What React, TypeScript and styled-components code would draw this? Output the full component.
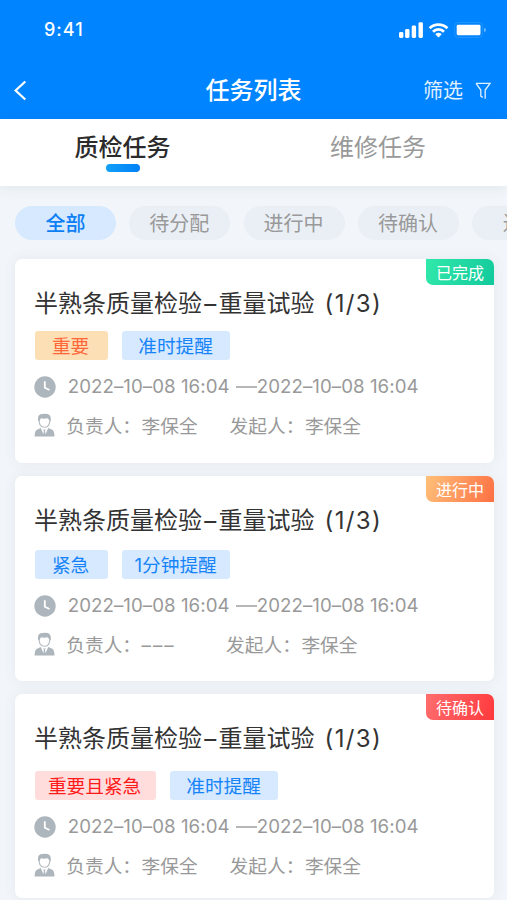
import React from 'react';
import styled, { createGlobalStyle, css } from 'styled-components';

const GlobalStyle = createGlobalStyle`
  * { box-sizing: border-box; }
  body {
    margin: 0;
    background: #f2f6fa;
    font-family: Inter, 'Noto Sans CJK SC', sans-serif;
    overflow: hidden;
  }
`;

const Screen = styled.div`
  width: 507px;
  height: 900px;
  overflow: hidden;
  display: flex;
  flex-direction: column;
  background: #f2f6fa;
`;

const Header = styled.header`
  flex: none;
  height: 118.5px;
  background: #0084ff;
  color: #fff;
`;

const StatusBar = styled.div`
  height: 60px;
  padding: 0 21px 0 44px;
  display: flex;
  align-items: center;
  justify-content: space-between;
`;

const Clock = styled.span`
  font-size: 18px;
  font-weight: 550;
  line-height: 20px;
  letter-spacing: 1px;
`;

const Signals = styled.div`
  display: flex;
  align-items: center;
  svg { display: block; }
`;

const NavBar = styled.div`
  height: 58px;
  padding: 4px 15px 0 13px;
  display: grid;
  grid-template-columns: 100px 1fr 100px;
  align-items: center;
`;

const BackButton = styled.button`
  width: 16px;
  height: 24px;
  padding: 0;
  border: 0;
  background: none;
  color: inherit;
  svg { display: block; }
`;

const PageTitle = styled.h1`
  margin: 0;
  padding-left: 2px;
  text-align: center;
  font-size: 24px;
  font-weight: 500;
  line-height: 32px;
`;

const FilterButton = styled.button`
  padding: 0;
  border: 0;
  background: none;
  color: #e2f1ff;
  font: inherit;
  font-size: 20px;
  line-height: 28px;
  display: flex;
  align-items: center;
  justify-content: flex-end;
  gap: 12px;
  svg { margin-right: 1px; }
`;

const Tabs = styled.nav`
  flex: none;
  height: 67.5px;
  display: grid;
  grid-template-columns: 245px 266px;
  background: #fff;
  box-shadow: 0 2px 12px rgba(60, 80, 100, 0.09);
`;

const Tab = styled.div<{ $active?: boolean }>`
  padding-top: 13px;
  display: flex;
  flex-direction: column;
  align-items: center;
  font-size: 24px;
  line-height: 32px;
  color: #999;
  ${(p) => p.$active && css`
    color: #2b2b2b;
    font-weight: 500;
  `}
`;

const TabMarker = styled.span`
  width: 34px;
  height: 8.5px;
  border-radius: 5px;
  background: linear-gradient(100deg, #14a0f8, #0080f8);
`;

const Chips = styled.div`
  flex: none;
  height: 73px;
  padding: 20px 0 0 15px;
  display: flex;
  gap: 13.3px;
`;

const Chip = styled.button<{ $active?: boolean; $wide?: boolean }>`
  flex: none;
  width: ${(p) => (p.$wide ? 122 : 101)}px;
  height: 34px;
  padding: 1px 1px 0 0;
  border: 0;
  border-radius: 17px;
  font: inherit;
  font-size: 20px;
  line-height: 34px;
  color: #999;
  background: #eaeff5;
  ${(p) => p.$active && css`
    padding-right: 0;
    color: #0d7ff5;
    font-weight: 500;
    background: #d6e9fe;
  `}
`;

const CardList = styled.main`
  padding: 0 13px 0 14.5px;
  display: flex;
  flex-direction: column;
  gap: 13.2px;
`;

const Card = styled.article`
  position: relative;
  flex: none;
  height: 204.3px;
  padding: 29px 20px 0;
  border-radius: 7px;
  background: #fff;
  box-shadow: 0 0 13px rgba(60, 80, 100, 0.08);
`;

const StatusBadge = styled.span<{ $from: string; $to: string }>`
  position: absolute;
  top: 0;
  right: 0;
  width: 68px;
  height: 26px;
  padding-top: 1px;
  border-radius: 0 7px 0 7px;
  background: linear-gradient(110deg, ${(p) => p.$from}, ${(p) => p.$to});
  color: #fff;
  font-size: 16px;
  line-height: 26px;
  text-align: center;
`;

const CardTitle = styled.h2`
  margin: 0 0 0 -0.5px;
  height: 31px;
  display: flex;
  font-size: 24px;
  font-weight: 400;
  line-height: 32px;
  color: #333;
  white-space: nowrap;
`;

const TitleDash = styled.span`
  width: 16.5px;
  text-align: center;
`;

const TitleCount = styled.span`
  margin-left: 10px;
  letter-spacing: 1.4px;
`;

const TagRow = styled.div<{ $offset: number }>`
  margin-top: ${(p) => p.$offset}px;
  display: flex;
  gap: 14.5px;
`;

const tones = {
  blue: css`background: #d6e9fe; color: #1684f8;`,
  orange: css`background: #fddfb5; color: #ff6639;`,
  red: css`background: #ffdddd; color: #ff1a1a;`,
};

const Tag = styled.span<{ $tone: keyof typeof tones; $width: number }>`
  width: ${(p) => p.$width}px;
  height: 29px;
  padding: 1px 0.8px 0 0;
  border-radius: 3px;
  font-size: 18.7px;
  line-height: 29px;
  text-align: center;
  white-space: nowrap;
  ${(p) => tones[p.$tone]}
`;

const MetaRow = styled.div<{ $top: number }>`
  height: 24px;
  margin: ${(p) => p.$top}px 0 0 -0.3px;
  display: flex;
  align-items: center;
  color: #999;
  font-size: 18.7px;
  line-height: 24px;
  white-space: nowrap;
  svg { display: block; flex: none; }
`;

const DateText = styled.span<{ $start?: boolean }>`
  width: ${(p) => (p.$start ? 168 : 164)}px;
  margin-left: ${(p) => (p.$start ? 11.5 : 0)}px;
  letter-spacing: 0.05px;
`;

const RangeLine = styled.svg`
  width: 21px;
  height: 2px;
`;

const Person = styled.span<{ $width?: number }>`
  margin-left: ${(p) => (p.$width ? 11.1 : 0)}px;
  width: ${(p) => (p.$width ? `${p.$width}px` : 'auto')};
  padding-top: 2px;
  display: flex;
`;

const PersonLabel = styled.span`
  width: 75.3px;
`;

const EmptyName = styled.span`
  letter-spacing: 2px;
`;

const SignalIcon = () => (
  <svg width="88" height="20" viewBox="0 0 88 20" fill="#fff">
    <rect x="1" y="12" width="4.4" height="6" rx="1.4" />
    <rect x="7.1" y="9" width="4.4" height="9" rx="1.4" />
    <rect x="13.7" y="5.6" width="4.4" height="12.4" rx="1.4" />
    <rect x="20.5" y="2.2" width="4.4" height="15.8" rx="1.4" />
    <path d="M30.6 7.2a14.2 14.2 0 0 1 19.8 0l-2 2.1a11.2 11.2 0 0 0-15.8 0z" />
    <path d="M34 10.7a9.3 9.3 0 0 1 13 0l-2 2a6.4 6.4 0 0 0-9 0z" />
    <path d="M37.3 14.2a4.7 4.7 0 0 1 6.4 0l-3.2 3.2z" />
    <rect x="56.6" y="2.5" width="27.8" height="15" rx="3.6" fill="none" stroke="#fff" strokeOpacity=".12" />
    <rect x="58.7" y="4.8" width="23.8" height="10.4" rx="1.4" />
    <path d="M86 7.8q2 .6 2 2.2t-2 2.2z" fillOpacity=".4" />
  </svg>
);

const BackIcon = () => (
  <svg width="16" height="24" viewBox="0 0 16 24" fill="none" stroke="#fff" strokeWidth="2.2">
    <path d="M12.3 2.5 2.6 11.5l9.7 9" />
  </svg>
);

const FunnelIcon = () => (
  <svg width="16" height="18" viewBox="0 0 16 18" fill="none" stroke="#e2f1ff" strokeWidth="1.3">
    <path d="M1 1.4h14L10.2 8v8.8M1 1.4 5.8 8v6.2l2 1.2" />
  </svg>
);

const ClockIcon = () => (
  <svg width="22" height="22" viewBox="0 0 22 22" fill="none">
    <circle cx="11" cy="11" r="10.7" fill="#adb6bc" />
    <path d="M10.8 5.3v6.4l4.7 2.3" stroke="#fff" strokeWidth="1.8" />
  </svg>
);

const PersonIcon = () => (
  <svg width="21" height="25" viewBox="0 0 21 25" fill="#adb6bc">
    <path d="M4.3 8.2Q2.7 1.4 8.4 1.1q9.6-1.8 8.3 7.1h-1.2q-.7-2.6-2.1-3-3.7.9-6.3 0-1.1.9-1.5 3z" />
    <path d="M5.1 7.2Q5.2 14.2 10.4 14.3T15.8 7.2" fill="none" stroke="#b6bec3" strokeWidth="1.1" />
    <path d="M.6 23.6q.1-6 2.4-6.9l3.8-1.7 2.6 6.3.5-3.5-.8-1.4h2.7l-.8 1.4.6 3.5 2.6-6.3 4.1 1.7q2.1.9 2.2 6.9z" />
  </svg>
);

type TagData = { text: string; tone: keyof typeof tones; width: number };
type Task = {
  status: string;
  from: string;
  to: string;
  offset: number;
  tags: TagData[];
  owner?: string;
  ownerWidth: number;
};

const tasks: Task[] = [
  {
    status: '已完成', from: '#31e9aa', to: '#12c99c', offset: 12,
    tags: [{ text: '重要', tone: 'orange', width: 73 }, { text: '准时提醒', tone: 'blue', width: 108 }],
    owner: '李保全', ownerWidth: 163.3,
  },
  {
    status: '进行中', from: '#ffc079', to: '#fe7044', offset: 13.8,
    tags: [{ text: '紧急', tone: 'blue', width: 73 }, { text: '1分钟提醒', tone: 'blue', width: 108 }],
    ownerWidth: 159.8,
  },
  {
    status: '待确认', from: '#ff6e6e', to: '#ff393d', offset: 17,
    tags: [{ text: '重要且紧急', tone: 'red', width: 121 }, { text: '准时提醒', tone: 'blue', width: 108 }],
    owner: '李保全', ownerWidth: 163.3,
  },
];

const TaskCard = ({ task }: { task: Task }) => (
  <Card>
    <StatusBadge $from={task.from} $to={task.to}>{task.status}</StatusBadge>
    <CardTitle>
      <span>半熟条质量检验</span>
      <TitleDash>–</TitleDash>
      <span>重量试验</span>
      <TitleCount>(1/3)</TitleCount>
    </CardTitle>
    <TagRow $offset={task.offset}>
      {task.tags.map((tag) => (
        <Tag key={tag.text} $tone={tag.tone} $width={tag.width}>{tag.text}</Tag>
      ))}
    </TagRow>
    <MetaRow $top={14.6}>
      <ClockIcon />
      <DateText $start>2022–10–08 16:04</DateText>
      <RangeLine viewBox="0 0 21 2">
        <path d="M0 1h21" stroke="#999" strokeWidth="1.4" />
      </RangeLine>
      <DateText>2022–10–08 16:04</DateText>
    </MetaRow>
    <MetaRow $top={15}>
      <PersonIcon />
      <Person $width={task.ownerWidth}>
        <PersonLabel>负责人：</PersonLabel>
        {task.owner ? <span>{task.owner}</span> : <EmptyName>–––</EmptyName>}
      </Person>
      <Person>
        <PersonLabel>发起人：</PersonLabel>
        <span>李保全</span>
      </Person>
    </MetaRow>
  </Card>
);

export default function App() {
  return (
    <Screen>
      <GlobalStyle />
      <Header>
        <StatusBar>
          <Clock>9:41</Clock>
          <Signals><SignalIcon /></Signals>
        </StatusBar>
        <NavBar>
          <BackButton aria-label="返回"><BackIcon /></BackButton>
          <PageTitle>任务列表</PageTitle>
          <FilterButton>筛选<FunnelIcon /></FilterButton>
        </NavBar>
      </Header>
      <Tabs>
        <Tab $active>质检任务<TabMarker /></Tab>
        <Tab>维修任务</Tab>
      </Tabs>
      <Chips>
        <Chip $active>全部</Chip>
        <Chip>待分配</Chip>
        <Chip>进行中</Chip>
        <Chip>待确认</Chip>
        <Chip $wide>进行中</Chip>
      </Chips>
      <CardList>
        {tasks.map((task) => <TaskCard key={task.status} task={task} />)}
      </CardList>
    </Screen>
  );
}
